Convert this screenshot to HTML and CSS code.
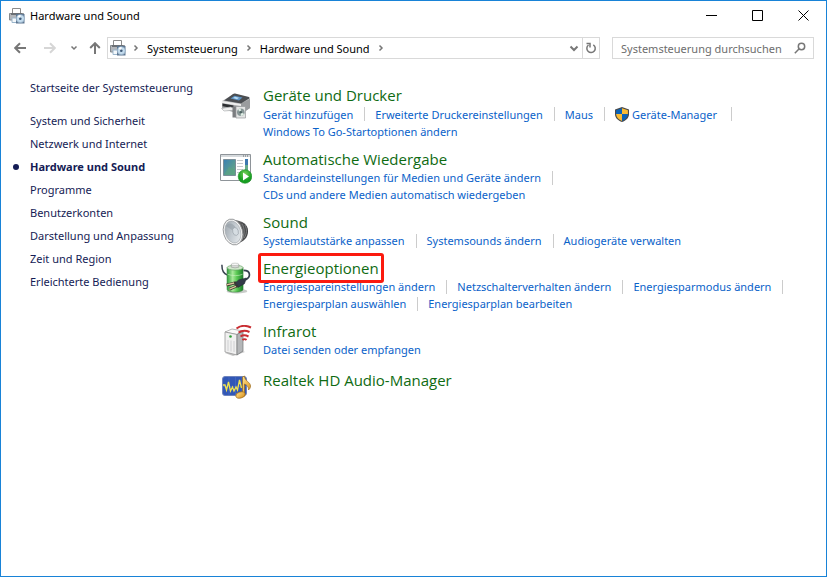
FILE: index.html
```html
<!DOCTYPE html>
<html lang="de">
<head>
    <meta charset="UTF-8">
    <meta name="viewport" content="width=device-width, initial-scale=1.0">
    <title>Hardware und Sound</title>
    <link rel="stylesheet" href="styles.css">
</head>
<body>
    <svg class="defs" aria-hidden="true">
        <symbol id="hardware" viewBox="0 0 16 16">
            <path d="M3.500 6V.5h8V6" fill="#fff" stroke="#8b8b8b"/>
            <path d="M.5 5.500h14v6.500H.5z" fill="#b3b6ba" stroke="#85898d"/>
            <path d="M2 5h11v2H2z" fill="#6c7075"/>
            <path d="M3 10h5v4.500H3z" fill="#f4f8fb" stroke="#9bb6cc"/>
            <path d="M7 6h8.500v9.500H7z" fill="#5c7590"/>
            <circle cx="11.300" cy="10.700" r="4" fill="#c4dcee" stroke="#8fa9c0" stroke-width=".7"/>
            <path d="M11.300 10.700 8.500 8.200a4 4 0 0 1 3-1.300z" fill="#fff"/>
            <circle cx="11.300" cy="10.700" r="1.300" fill="#3f5a78"/>
        </symbol>
        <symbol id="crumb" viewBox="0 0 6 8">
            <path d="M1.500 1.500 4 4 1.500 6.500" fill="none" stroke="#777" stroke-width="1.500"/>
        </symbol>
    </svg>

    <div class="window">
        <header class="titlebar">
            <svg class="small-icon"><use href="#hardware"/></svg>
            <h1>Hardware und Sound</h1>
            <div class="window-buttons">
                <button type="button" aria-label="Minimieren"><svg viewBox="0 0 11 11"><path d="M0 5.500h11"/></svg></button>
                <button type="button" aria-label="Maximieren"><svg viewBox="0 0 11 11"><path d="M.5.5h10v10H.5z"/></svg></button>
                <button type="button" aria-label="Schließen"><svg viewBox="0 0 11 11"><path d="m.5.5 10 10m0-10-10 10"/></svg></button>
            </div>
        </header>

        <nav class="toolbar" aria-label="Navigation">
            <div class="history">
                <button type="button" class="step" aria-label="Zurück"><svg viewBox="0 0 12 12"><path d="M12 6H1.500M6 1.200 1.200 6 6 10.800"/></svg></button>
                <button type="button" class="step" aria-label="Vorwärts" disabled><svg viewBox="0 0 12 12"><path d="M0 6h10.500M6 1.200 10.800 6 6 10.800"/></svg></button>
                <button type="button" class="recent" aria-label="Zuletzt besuchte Orte"><svg viewBox="0 0 12 12"><path d="m3.500 4.500 2.500 2.500 2.500-2.500"/></svg></button>
                <button type="button" class="up" aria-label="Nach oben"><svg viewBox="0 0 12 12"><path d="M6 12V1.500M1.200 6 6 1.200 10.800 6"/></svg></button>
            </div>
            <div class="address">
                <svg class="small-icon"><use href="#hardware"/></svg>
                <svg class="crumb"><use href="#crumb"/></svg>
                <a href="#">Systemsteuerung</a>
                <svg class="crumb"><use href="#crumb"/></svg>
                <a href="#">Hardware und Sound</a>
                <svg class="crumb"><use href="#crumb"/></svg>
                <button type="button" class="expand" aria-label="Vorherige Orte"><svg viewBox="0 0 12 12"><path d="M2.500 4.500 6 8l3.500-3.500"/></svg></button>
                <button type="button" class="refresh" aria-label="Aktualisieren"><svg viewBox="0 0 12 12"><path d="M8.300 2.800a4.200 4.200 0 1 1-4.800.2M1.500 1.500H5v4"/></svg></button>
            </div>
            <form class="search">
                <input type="text" placeholder="Systemsteuerung durchsuchen" aria-label="Systemsteuerung durchsuchen">
                <button type="submit" aria-label="Suchen"><svg viewBox="0 0 12 12"><circle cx="7.500" cy="4.500" r="3.200"/><path d="M5.200 6.800.8 11.200"/></svg></button>
            </form>
        </nav>

        <div class="content">
            <aside class="sidebar">
                <a href="#" class="home">Startseite der Systemsteuerung</a>
                <ul>
                    <li><a href="#">System und Sicherheit</a></li>
                    <li><a href="#">Netzwerk und Internet</a></li>
                    <li class="current"><a href="#" aria-current="page">Hardware und Sound</a></li>
                    <li><a href="#">Programme</a></li>
                    <li><a href="#">Benutzerkonten</a></li>
                    <li><a href="#">Darstellung und Anpassung</a></li>
                    <li><a href="#">Zeit und Region</a></li>
                    <li><a href="#">Erleichterte Bedienung</a></li>
                </ul>
            </aside>

            <main class="categories">
                <section class="category">
                    <svg class="icon" viewBox="0 0 32 32">
                        <defs>
                            <linearGradient id="printer" x2="0" y2="1"><stop stop-color="#d4d5d6"/><stop offset="1" stop-color="#898b8d"/></linearGradient>
                        </defs>
                        <path d="M2 12 14 5l16 4v10l-9 6-19-5z" fill="url(#printer)"/>
                        <path d="M21 14.500 30 10v9l-9 6z" fill="#9a9c9e"/>
                        <path d="M4 11.500 13 5q1-.6 2-.4L29 8q1 .5 0 1.500L21 14.500z" fill="#4b4e52"/>
                        <path d="m10.500 9.500 4-2.700 8 1.800-3.500 3z" fill="#5d93c4"/>
                        <path d="m13 9 2-1.200 4 1-2 1.400z" fill="#b9dcf5"/>
                        <path d="m2 12 19 3v2L1.500 14z" fill="#eee"/>
                        <path d="m2.500 14.500 11 2v2.800l-11-2z" fill="#2b2d30"/>
                        <path d="m1.500 19.500 9-1.500 4 1.200v2L4 22z" fill="#f0f0f0" stroke="#a5a7aa" stroke-width=".6"/>
                        <path d="M12.500 17.500H16v11h-3.500z" fill="#7b7d80"/>
                        <path d="M16 17.500h9.500V29H16z" fill="#e3e4e4" stroke="#97999b" stroke-width=".7"/>
                        <circle cx="20.800" cy="23.300" r="3.800" fill="#879696"/>
                        <path d="m20.800 23.300-2.800-2.500a3.800 3.800 0 0 1 2.800-1.300zM20.800 23.300l3.400 1.700a3.800 3.800 0 0 1-3.400 2z" fill="#e1f0e6"/>
                        <circle cx="20.800" cy="23.300" r="1.200" fill="#4c6260"/>
                    </svg>
                    <div>
                        <h2><a href="#">Geräte und Drucker</a></h2>
                        <ul class="tasks with-shield">
                            <li><a href="#">Gerät hinzufügen</a></li>
                            <li><a href="#">Erweiterte Druckereinstellungen</a></li>
                            <li><a href="#">Maus</a></li>
                            <li class="admin">
                                <svg class="shield" viewBox="0 0 14 15">
                                    <path d="M7 0 14 2.500V7c0 4-3 6.500-7 8-4-1.500-7-4-7-8V2.500z" fill="#4a4a4a"/>
                                    <path d="M7 1.200V7H1.100V3.200z" fill="#0b63b8"/>
                                    <path d="M7 1.200V7h5.900V3.200z" fill="#fbbc34"/>
                                    <path d="M7 7v6.900C3.500 12.500 1.300 10.500 1.100 7z" fill="#fbbc34"/>
                                    <path d="M7 7v6.900c3.500-1.400 5.700-3.400 5.900-6.900z" fill="#0b63b8"/>
                                </svg>
                                <a href="#">Geräte-Manager</a>
                            </li>
                        </ul>
                        <ul class="tasks last">
                            <li><a href="#">Windows To Go-Startoptionen ändern</a></li>
                        </ul>
                    </div>
                </section>

                <section class="category">
                    <svg class="icon" viewBox="0 0 32 32">
                        <defs>
                            <linearGradient id="picture" x2="1" y2="1"><stop stop-color="#397fb5"/><stop offset="1" stop-color="#6cae7b"/></linearGradient>
                            <radialGradient id="play" cy=".3"><stop stop-color="#76d058"/><stop offset="1" stop-color="#179e21"/></radialGradient>
                        </defs>
                        <path d="M.5 1.500h30v26H.5z" fill="#fff" stroke="#8e9499"/>
                        <path d="M1 2h29v2H1z" fill="#d5d9dc"/>
                        <path d="M23 3h1m1 0h1m1 0h1" stroke="#62686d"/>
                        <path d="M3.500 6.500h12v16h-12z" fill="url(#picture)" stroke="#7a8e99"/>
                        <path d="m4 22 5-8 6 3v5z" fill="#5aa283" opacity=".7"/>
                        <path d="M17 7.500h6m-6 3h6m-6 3h6m-6 3h6m-6 3h4" stroke="#c4c9cc"/>
                        <path d="M25 6h3v12h-3z" fill="#3b78b0"/>
                        <path d="M25 12h3v6h-3z" fill="#66aa8c"/>
                        <circle cx="25" cy="23.500" r="6.800" fill="url(#play)" stroke="#198d22" stroke-width=".6"/>
                        <path d="m23 19.500 6 4-6 4z" fill="#fff"/>
                    </svg>
                    <div>
                        <h2><a href="#">Automatische Wiedergabe</a></h2>
                        <ul class="tasks">
                            <li><a href="#">Standardeinstellungen für Medien und Geräte ändern</a></li>
                        </ul>
                        <ul class="tasks last">
                            <li><a href="#">CDs und andere Medien automatisch wiedergeben</a></li>
                        </ul>
                    </div>
                </section>

                <section class="category">
                    <svg class="icon" viewBox="0 0 32 32">
                        <defs>
                            <linearGradient id="cone" x2="1" y2="1"><stop stop-color="#98a0a7"/><stop offset=".5" stop-color="#c5ccd2"/><stop offset="1" stop-color="#edf0f2"/></linearGradient>
                            <linearGradient id="magnet"><stop stop-color="#777"/><stop offset="1" stop-color="#38393b"/></linearGradient>
                        </defs>
                        <path d="M15 4c7 1 13 4 13 11s-4 10-11 13z" fill="url(#magnet)"/>
                        <path d="M22 8c3 4 3 12-1 17M25 9c2 4 2 9-1 13" fill="none" stroke="#8d8f91" stroke-width=".8"/>
                        <ellipse cx="13" cy="16" rx="9.500" ry="13.200" transform="rotate(-16 13 16)" fill="#f3f3f3" stroke="#8b8d8f" stroke-width=".8"/>
                        <ellipse cx="13" cy="16" rx="7.600" ry="11.200" transform="rotate(-16 13 16)" fill="url(#cone)" stroke="#a2a8ad" stroke-width=".6"/>
                        <path d="M6 10c3-4 7-3 10 2l-1 4z" fill="#8e989f" opacity=".5"/>
                        <ellipse cx="15.500" cy="15.500" rx="2.800" ry="4" transform="rotate(-16 15.500 15.500)" fill="#d6dde2" stroke="#98a1a8" stroke-width=".6"/>
                    </svg>
                    <div>
                        <h2><a href="#">Sound</a></h2>
                        <ul class="tasks last">
                            <li><a href="#">Systemlautstärke anpassen</a></li>
                            <li><a href="#">Systemsounds ändern</a></li>
                            <li><a href="#">Audiogeräte verwalten</a></li>
                        </ul>
                    </div>
                </section>

                <section class="category">
                    <svg class="icon" viewBox="0 0 32 34">
                        <defs>
                            <linearGradient id="battery"><stop stop-color="#2e9e38"/><stop offset=".35" stop-color="#a9e99b"/><stop offset=".6" stop-color="#5cca55"/><stop offset="1" stop-color="#1b7d2a"/></linearGradient>
                        </defs>
                        <ellipse cx="17" cy="31" rx="11" ry="2.500" fill="#c9ccc9"/>
                        <path d="M1 3c0 7 2 9 6 11" fill="none" stroke="#394350" stroke-width="1.600"/>
                        <path d="M6.500 6v23c0 4 17 4 17 0V6z" fill="url(#battery)" stroke="#39813e" stroke-width=".6"/>
                        <ellipse cx="15" cy="6" rx="8.500" ry="2.600" fill="#d1e8cc" stroke="#63a263" stroke-width=".7"/>
                        <path d="M11 2.500h8v3q-4 1.500-8 0z" fill="#d6d9d6" stroke="#8d938d" stroke-width=".6"/>
                        <ellipse cx="15" cy="2.500" rx="4" ry="1.300" fill="#f7f7f7" stroke="#9ea49e" stroke-width=".5"/>
                        <path d="M7 13c5 2 12 2 16 0" fill="none" stroke="#d3f4c8" opacity=".6"/>
                        <path d="M24 9c8 0 8 7 2 10" fill="none" stroke="#343e4d" stroke-width="1.800"/>
                        <path d="m27 17-2 6-7 4-4-4 5-4z" fill="#333b49" stroke="#1f2530" stroke-width=".6"/>
                        <path d="m16 22-10 2.500M18 25l-9 4" stroke="#3a3530" stroke-width="3"/>
                        <path d="m14 22.300-8 2M16 25.800l-7 3" stroke="#dcc59c" stroke-width="1.400"/>
                    </svg>
                    <div>
                        <h2 class="marked"><a href="#">Energieoptionen</a></h2>
                        <ul class="tasks">
                            <li><a href="#">Energiespareinstellungen ändern</a></li>
                            <li><a href="#">Netzschalterverhalten ändern</a></li>
                            <li><a href="#">Energiesparmodus ändern</a></li>
                        </ul>
                        <ul class="tasks last">
                            <li><a href="#">Energiesparplan auswählen</a></li>
                            <li><a href="#">Energiesparplan bearbeiten</a></li>
                        </ul>
                    </div>
                </section>

                <section class="category">
                    <svg class="icon" viewBox="0 0 32 32">
                        <path d="m5 28 8 3 12-4-4-2z" fill="#c5c5c5"/>
                        <path d="m5 7 7-3 11 2-6 3.500z" fill="#fafafa" stroke="#999" stroke-width=".7"/>
                        <path d="m5 7 12 2.500V30L5 27z" fill="#f0f0f0" stroke="#8d8d8d" stroke-width=".7"/>
                        <path d="m17 9.500 6-3.500v20l-6 4z" fill="#b4b6b8" stroke="#737577" stroke-width=".7"/>
                        <path d="M8 15v11M11 15.500v11M14 16v11" stroke="#c6c8ca" stroke-width=".8"/>
                        <circle cx="10.500" cy="11.500" r="1.300" fill="#2d9f36"/>
                        <path d="M16.500 3.500c4-3 9-3.500 14.500-1M18.500 7.500c4-2.500 7-2.500 11-.5M20.500 11.500c3-2 5-1.500 8 0M22.500 15c1-1 3-1 4 0" fill="none" stroke="#c92d32" stroke-width="2"/>
                    </svg>
                    <div>
                        <h2><a href="#">Infrarot</a></h2>
                        <ul class="tasks last">
                            <li><a href="#">Datei senden oder empfangen</a></li>
                        </ul>
                    </div>
                </section>

                <section class="category">
                    <svg class="icon" viewBox="0 0 32 32">
                        <defs>
                            <linearGradient id="note" x2="1" y2="1"><stop stop-color="#ffe18b"/><stop offset="1" stop-color="#d98e18"/></linearGradient>
                        </defs>
                        <rect x="2.500" y="5.500" width="24" height="19" rx="2.500" fill="#3157b6" stroke="#6e83bd"/>
                        <path d="M3 15.500h23M9 6v18M15.500 6v18M22 6v18" stroke="#496bc0" stroke-width=".7"/>
                        <path d="M3 14h2l1.500 5 2-8 2 9 2-4 1.500 4 2-4 1.500 3 2-10 2 8" fill="none" stroke="#f2e34d" stroke-width="1.300"/>
                        <path d="M22.500 23V6l2-1c0 5 6 6 6 10 0 2-1 3-2 4 0-4-2-5-4-6v12z" fill="url(#note)" stroke="#9a6819" stroke-width=".7"/>
                        <ellipse cx="20.500" cy="24" rx="4.800" ry="3" transform="rotate(-14 20.500 24)" fill="url(#note)" stroke="#9a6819" stroke-width=".7"/>
                    </svg>
                    <div>
                        <h2 class="single"><a href="#">Realtek HD Audio-Manager</a></h2>
                    </div>
                </section>
            </main>
        </div>
    </div>
</body>
</html>
```
FILE: styles.css
```css
* {
    box-sizing: border-box;
}
body {
    margin: 0;
    background: #fff;
    color: #000;
    font-family: "Noto Sans", "Open Sans", sans-serif;
    font-size: 11px;
    line-height: 17px;
}
h1, h2, ul {
    margin: 0;
    padding: 0;
    font-weight: normal;
    list-style: none;
}
a {
    color: inherit;
    text-decoration: none;
    white-space: nowrap;
}
svg {
    display: block;
    flex: none;
}
button {
    display: flex;
    align-items: center;
    justify-content: center;
    flex: none;
    padding: 0;
    border: 0;
    background: none;
}
button svg {
    width: 12px;
    height: 12px;
    fill: none;
    stroke: #777;
    stroke-width: 2;
}
.defs {
    display: none;
}
.window {
    min-height: 100vh;
    border: 1px solid #1883d7;
}
.small-icon {
    width: 16px;
    height: 16px;
}

/* Title bar */
.titlebar {
    display: flex;
    align-items: center;
    gap: 5px;
    height: 29px;
    padding-left: 8px;
}
.titlebar h1 {
    flex: 1;
    font-size: 11px;
}
.window-buttons {
    display: flex;
}
.window-buttons button {
    width: 46px;
    height: 29px;
}
.window-buttons svg {
    width: 11px;
    height: 11px;
    stroke: #000;
    stroke-width: 1;
}

/* Navigation row */
.toolbar {
    display: flex;
    align-items: center;
    gap: 12px;
    margin-top: 7px;
    padding: 0 12px 0 4px;
}
.history {
    display: flex;
    margin-right: -12px;
}
.step {
    width: 30px;
    height: 22px;
}
.step:disabled svg {
    stroke: #d6d6d6;
}
.recent {
    width: 17px;
}
.recent svg {
    stroke-width: 1.5;
}
.up {
    width: 25px;
}
.address {
    display: flex;
    align-items: center;
    flex: 1;
    height: 22px;
    padding-left: 2px;
    border: 1px solid #d9d9d9;
}
.address a {
    margin: 0 8px;
}
.crumb {
    width: 6px;
    height: 8px;
}
.small-icon + .crumb {
    margin-left: 7px;
}
.expand {
    width: 16px;
    height: 20px;
    margin-left: auto;
}
.refresh {
    width: 17px;
    height: 20px;
    border-left: 1px solid #d9d9d9;
}
.refresh svg, .search svg {
    stroke-width: 1.5;
}
.search {
    display: flex;
    width: 202px;
    height: 22px;
    border: 1px solid #d9d9d9;
}
.search input {
    flex: 1;
    min-width: 0;
    padding: 0 0 0 8px;
    border: 0;
    outline: 0;
    background: none;
    font: inherit;
}
.search input::placeholder {
    color: #6d6d6d;
}
.search button {
    width: 26px;
}

/* Content */
.content {
    display: flex;
    padding-top: 20px;
}
.sidebar {
    flex: none;
    width: 219px;
    padding-left: 29px;
    color: #151c55;
    line-height: 23px;
}
.home {
    display: block;
    margin: -3px 0 10px;
}
.current {
    position: relative;
    font-weight: bold;
}
.current::before {
    content: "";
    position: absolute;
    top: 9px;
    left: -17px;
    width: 6px;
    height: 6px;
    border-radius: 50%;
    background: #151c55;
}
.categories {
    display: flex;
    flex-direction: column;
    flex: 1;
    gap: 9px;
    min-width: 0;
    padding-top: 6px;
}
.category {
    display: flex;
    gap: 11px;
}
.icon {
    width: 32px;
    height: 32px;
    margin-top: 4px;
}
h2 {
    color: #0f6b12;
    font-family: "Open Sans", "Noto Sans", sans-serif;
    font-size: 15px;
    line-height: 20px;
}
.single {
    padding-top: 3px;
}
.marked a {
    position: relative;
}
.marked a::after {
    content: "";
    position: absolute;
    inset: -5px;
    border: 3px solid #fb1a0e;
    border-radius: 3px;
}
.tasks {
    display: flex;
    align-items: center;
    color: #0a62c9;
}
.tasks li {
    display: flex;
    align-items: center;
}
.tasks li::after {
    content: "";
    width: 1px;
    height: 14px;
    margin: 0 10px 0 11px;
    background: #ccc;
}
.tasks.last li:last-child::after {
    display: none;
}
.with-shield {
    height: 18px;
}
.admin {
    gap: 3px;
}
.shield {
    width: 14px;
    height: 15px;
}
```
